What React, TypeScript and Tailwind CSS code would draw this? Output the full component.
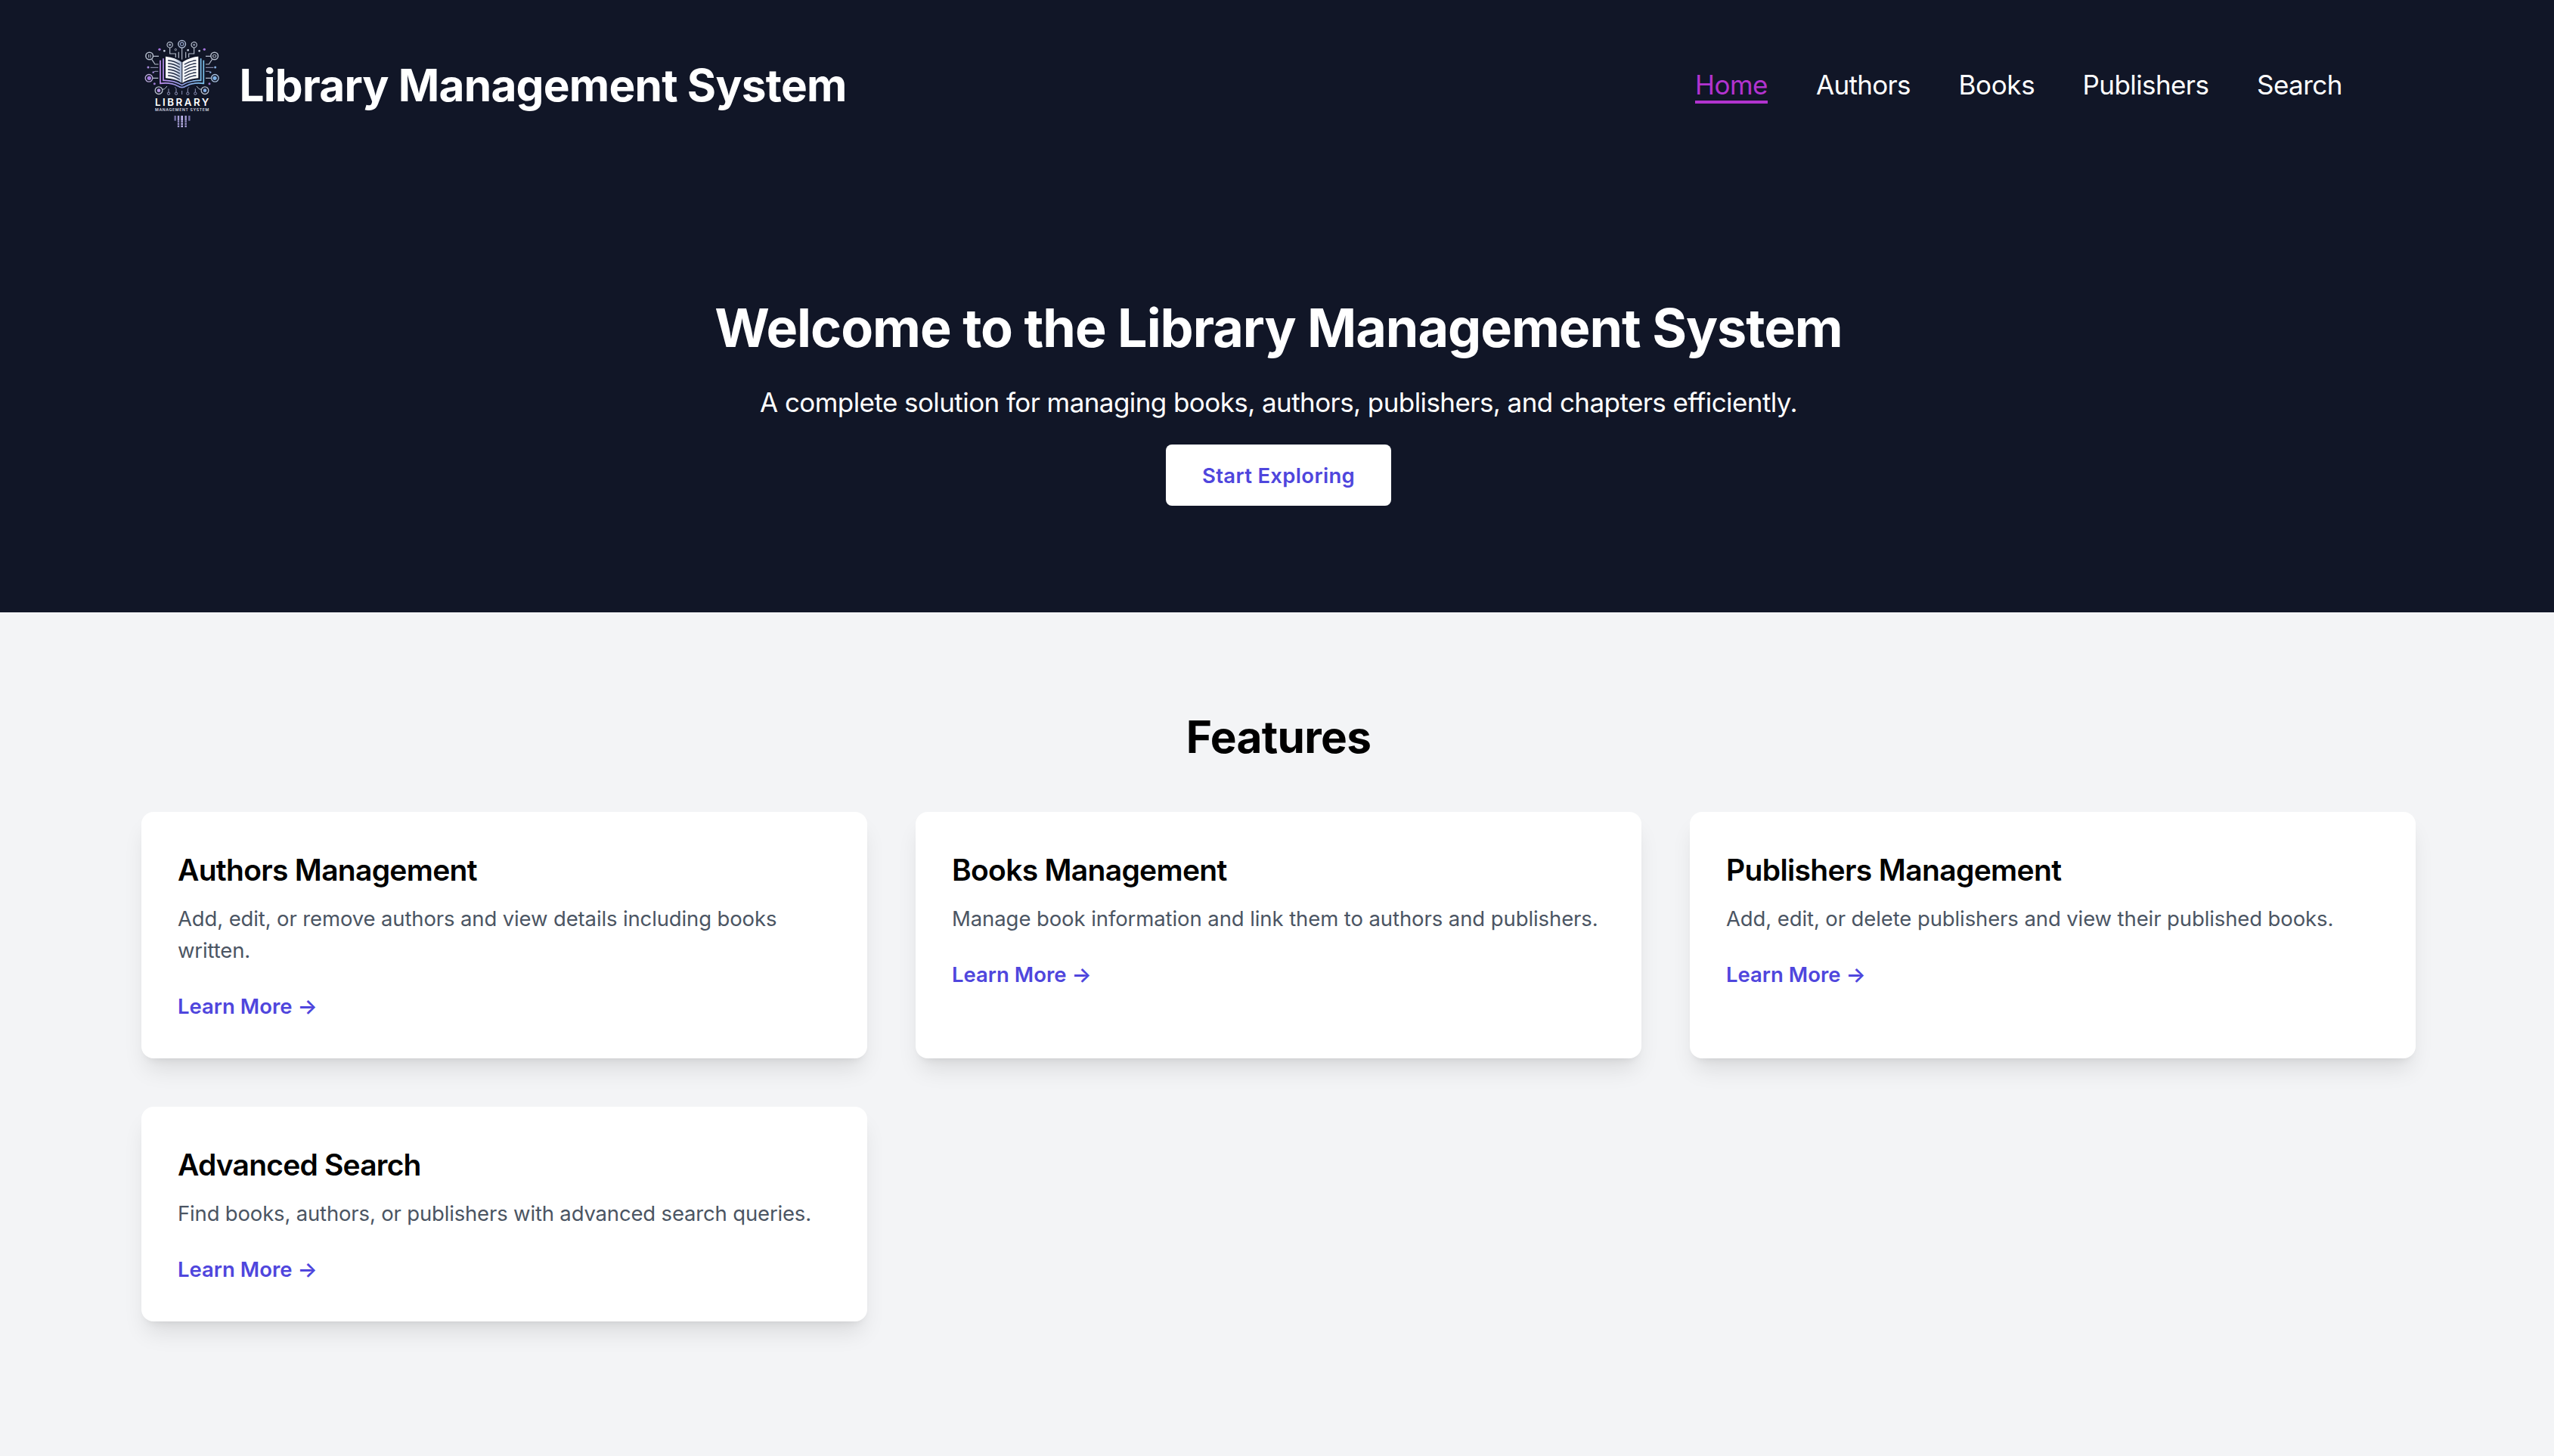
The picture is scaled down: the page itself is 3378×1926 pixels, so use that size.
const pageLines = [122, 134, 146, 158, 170, 182];

function Logo() {
  return (
    <svg className="h-[140px] w-[113px] shrink-0" viewBox="21 0 339 420" fill="none">
      <defs>
        <linearGradient id="cover" gradientUnits="userSpaceOnUse" x1="94" y1="0" x2="270" y2="0">
          <stop offset="0" stopColor="#c08df0" />
          <stop offset="0.5" stopColor="#8f9be0" />
          <stop offset="1" stopColor="#7cc6ee" />
        </linearGradient>
        <linearGradient id="pageLeft" x1="0" y1="0" x2="1" y2="0">
          <stop offset="0" stopColor="#ffffff" />
          <stop offset="0.6" stopColor="#e4e8f2" />
          <stop offset="1" stopColor="#9fb0d0" />
        </linearGradient>
        <linearGradient id="pageRight" x1="0" y1="0" x2="1" y2="0">
          <stop offset="0" stopColor="#f4f6fb" />
          <stop offset="1" stopColor="#ffffff" />
        </linearGradient>
      </defs>

      {/* circuit traces */}
      <g stroke="#b4bccb" strokeWidth="3.5">
        <circle cx="134" cy="58" r="11" />
        <circle cx="182" cy="55" r="14.5" stroke="#a9b6cf" strokeWidth="4.5" />
        <circle cx="182" cy="55" r="6.5" stroke="#8f9fc4" />
        <circle cx="230" cy="58" r="11" />
        <path d="M182 70V116M134 69V93H157V108M230 69V93H209V108M169 86V110M197 86V110" />
        <circle cx="157" cy="77" r="3.5" strokeWidth="2.5" />
        <circle cx="53" cy="102" r="14.5" strokeWidth="4.5" />
        <circle cx="311" cy="102" r="14.5" strokeWidth="4.5" />
        <path d="M68 103H90M62 115L75 135H89M296 103H276M302 115L289 135H276" />
        <path d="M50 96V109M57 96V109" strokeWidth="3" />
        <path d="M305 99V106Q311 110 317 106V99Q311 95 305 99Z" strokeWidth="3" />
        <path d="M57 148H88M307 148H276M68 167L75 163H88M296 167L289 163H276" stroke="#9a9cbc" strokeWidth="3" />
        <circle cx="51" cy="190" r="14.5" strokeWidth="4" stroke="#b9a9d8" />
        <circle cx="313" cy="190" r="14.5" strokeWidth="4" stroke="#a9c0dc" />
        <path d="M66 190H88M298 190H276" />
        <circle cx="90" cy="239" r="14.5" strokeWidth="4" />
        <circle cx="273" cy="239" r="14.5" strokeWidth="4" />
        <path d="M104 235L113 233L123 222M259 235L250 233L240 222" strokeWidth="3" />
        <g strokeWidth="3" stroke="#8d92b8">
          <circle cx="129" cy="251" r="5" />
          <circle cx="159" cy="251" r="5" />
          <circle cx="205" cy="251" r="5" />
          <circle cx="235" cy="251" r="5" />
          <path d="M129 246V232M159 246V232L154 226M205 246V232L210 226M235 246V232M182 240V255" />
        </g>
      </g>
      <circle cx="134" cy="58" r="4.5" fill="#8d96ac" />
      <circle cx="230" cy="58" r="4" fill="#8d96ac" />
      <circle cx="206" cy="79" r="4" fill="#c6cede" />
      <circle cx="112" cy="82" r="4" fill="#c6cede" />
      <circle cx="251" cy="82" r="4" fill="#c6cede" />
      <circle cx="93" cy="76" r="5" fill="#a374dc" />
      <circle cx="271" cy="76" r="5" fill="#a374dc" />
      <circle cx="48" cy="147" r="4.5" fill="#a98be0" />
      <circle cx="314" cy="147" r="4.5" fill="#86aee0" />
      <circle cx="68" cy="167" r="3.5" fill="#a98be0" />
      <circle cx="295" cy="167" r="3.5" fill="#86aee0" />
      <circle cx="73" cy="212" r="4.5" fill="#9a78cf" />
      <circle cx="291" cy="212" r="4.5" fill="#9a78cf" />
      <circle cx="52" cy="190" r="8" fill="#a77fe0" />
      <circle cx="312" cy="190" r="8" fill="#7db0e4" />
      <circle cx="90" cy="239" r="7" fill="#b596e6" />
      <circle cx="273" cy="239" r="7" fill="#84aee6" />

      {/* book */}
      <path
        d="M96 119V211Q138 206 165 221Q182 233 199 221Q226 206 268 211V119"
        stroke="url(#cover)"
        strokeWidth="5"
      />
      <path d="M108 112V199Q150 198 182 218Q214 198 257 199V112" stroke="url(#cover)" strokeWidth="5" />
      <path d="M117 104Q156 108 181 127V209Q156 192 117 190Z" fill="url(#pageLeft)" />
      <path d="M247 104Q208 108 184 127V209Q208 192 247 190Z" fill="url(#pageRight)" />
      <g stroke="#1f2a44" strokeWidth="4" strokeLinecap="round">
        {pageLines.map((y) => (
          <path key={y} d={`M128 ${y - 2}Q152 ${y} 172 ${y + 13}M237 ${y - 2}Q213 ${y} 193 ${y + 13}`} />
        ))}
      </g>

      <text x="75" y="300" textLength="214" lengthAdjust="spacing" className="fill-white font-['Inter'] text-[40px] font-semibold">
        LIBRARY
      </text>
      <text x="75" y="320" textLength="214" lengthAdjust="spacing" className="fill-[#d3d7e0] font-['Inter'] text-[15.5px] font-semibold">
        MANAGEMENT SYSTEM
      </text>

      <g strokeWidth="7" strokeDasharray="20 2 6 2 6 2">
        <path d="M155 339V361M211 339V361" stroke="#7671a6" />
        <path d="M168 339V385M197 339V385" stroke="#a39bd3" />
        <path d="M182 339V385" stroke="#bdb4ea" strokeWidth="8" />
      </g>
    </svg>
  );
}

const navLinks = [
  { label: 'Home', className: 'h-[46px] w-[96px] border-b-4 border-[#b233cf] text-[#b233cf] tracking-[-0.55px]' },
  { label: 'Authors', className: 'w-[124.5px] tracking-[-0.7px]' },
  { label: 'Books', className: 'w-[100px] tracking-[-0.35px]' },
  { label: 'Publishers', className: 'w-[166.5px] tracking-[-0.58px]' },
  { label: 'Search', className: 'w-[114px] tracking-[-0.55px]' },
];

const features = [
  {
    title: 'Authors Management',
    text: 'Add, edit, or remove authors and view details including books written.',
    titleClass: 'tracking-[-0.7px]',
    textClass: 'tracking-[-0.13px]',
  },
  {
    title: 'Books Management',
    text: 'Manage book information and link them to authors and publishers.',
    titleClass: 'tracking-[-0.69px]',
    textClass: 'tracking-[-0.09px]',
  },
  {
    title: 'Publishers Management',
    text: 'Add, edit, or delete publishers and view their published books.',
    titleClass: 'tracking-[-0.64px]',
    textClass: 'tracking-[-0.106px]',
  },
  {
    title: 'Advanced Search',
    text: 'Find books, authors, or publishers with advanced search queries.',
    titleClass: 'tracking-[-0.8px]',
    textClass: 'tracking-[-0.17px]',
  },
];

export default function App() {
  return (
    <div className="h-[1926px] w-full overflow-hidden bg-[#f3f4f6] font-['Inter',sans-serif]">
      <div className="h-[810px] bg-[#111627] text-white">
        <header className="flex h-[224px] items-center pr-[279px] pl-[187px]">
          <div className="flex items-center">
            <div className="flex h-[144px] items-start">
              <Logo />
            </div>
            <h1 className="ml-[16.5px] pt-[2px] text-[58.5px] leading-[72px] font-bold tracking-[-0.78px] whitespace-nowrap">
              Library Management System
            </h1>
          </div>
          <nav className="ml-auto flex h-[42px] items-start gap-16">
            {navLinks.map((link) => (
              <a key={link.label} href="#" className={`text-[35px] leading-[42px] whitespace-nowrap ${link.className}`}>
                {link.label}
              </a>
            ))}
          </nav>
        </header>

        <section className="ml-[187px] flex w-[3008px] flex-col items-center pt-[168px] text-center">
          <h2 className="text-[70px] leading-[84px] font-bold tracking-[-1.028px]">
            Welcome to the Library Management System
          </h2>
          <p className="mt-[35px] text-[35px] leading-[42px] tracking-[-0.575px]">
            A complete solution for managing books, authors, publishers, and chapters efficiently.
          </p>
          <a
            href="#"
            className="mt-[35px] flex h-[81px] w-[298px] items-center justify-center rounded-lg bg-white text-[27.5px] leading-[42px] font-semibold tracking-[0.316px] text-[#4f46dd]"
          >
            Start Exploring
          </a>
        </section>
      </div>

      <section className="ml-[187px] w-[3008px] pt-[135px] text-black">
        <h2 className="text-center text-[58.5px] leading-[60px] font-bold tracking-[-0.645px]">Features</h2>
        <div className="mt-[69px] grid grid-cols-3 gap-16">
          {features.map((f) => (
            <article
              key={f.title}
              className="rounded-2xl bg-white p-12 shadow-[0_20px_30px_-6px_rgba(0,0,0,0.1),0_8px_12px_-8px_rgba(0,0,0,0.1)]"
            >
              <h3 className={`text-[39px] leading-[57px] font-semibold ${f.titleClass}`}>{f.title}</h3>
              <p className={`mt-[15px] text-[27.5px] leading-[42px] text-[#4b5563] ${f.textClass}`}>{f.text}</p>
              <a href="#" className="mt-8 block text-[27.5px] leading-[42px] font-semibold text-[#4f46dd]">
                Learn More →
              </a>
            </article>
          ))}
        </div>
      </section>
    </div>
  );
}
